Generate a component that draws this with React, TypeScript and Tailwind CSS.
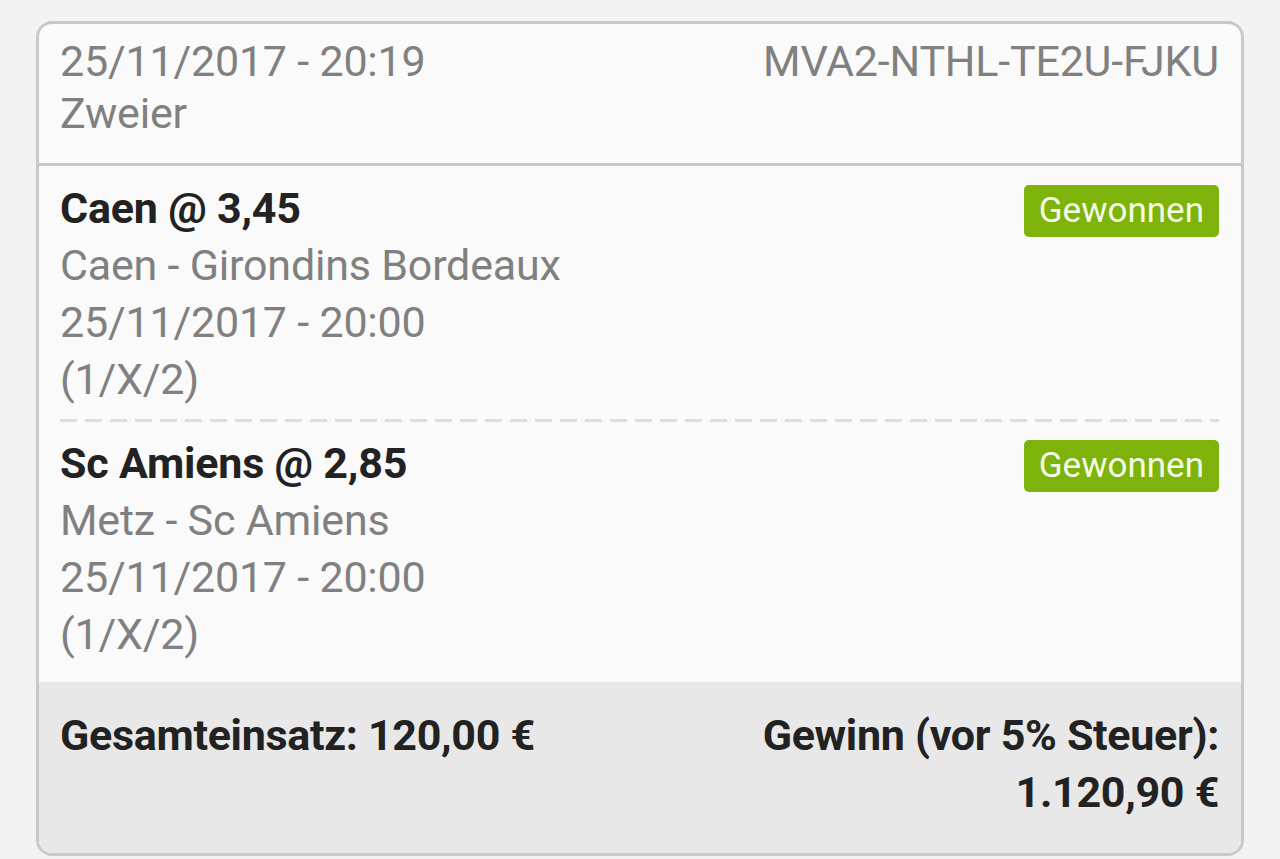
const BETS = [
  { pick: 'Caen @ 3,45', match: 'Caen - Girondins Bordeaux', date: '25/11/2017 - 20:00', market: '(1/X/2)' },
  { pick: 'Sc Amiens @ 2,85', match: 'Metz - Sc Amiens', date: '25/11/2017 - 20:00', market: '(1/X/2)' },
];

function BetRow({ bet, last }: { bet: (typeof BETS)[number]; last: boolean }) {
  return (
    <div className={last ? 'pt-[13px] pb-[19px]' : 'pt-[14px] pb-[11px]'}>
      <div className="flex items-start justify-between">
        <div className="text-[43px] leading-[57px] tracking-[-0.2px]">
          <div className="font-bold text-[#222222]">{bet.pick}</div>
          <div className="text-[#808080]">{bet.match}</div>
          <div className="text-[#808080]">{bet.date}</div>
          <div className="text-[#808080]">{bet.market}</div>
        </div>
        <span className="mt-[5px] rounded-[5px] bg-[#7db30a] px-[15px] text-[35px] leading-[52px] text-[#f4fbe6]">
          Gewonnen
        </span>
      </div>
    </div>
  );
}

export default function App() {
  return (
    <div className="min-h-screen bg-[#f3f3f3] px-[36px] pt-[21px] font-['Roboto',sans-serif]">
      <div className="overflow-hidden rounded-[16px] border-[3px] border-[#c9c9c9] bg-[#fafafa]">
        <div className="flex justify-between border-b-[3px] border-[#c9c9c9] pt-[11px] pr-[22px] pb-[24px] pl-[21px] text-[43px] leading-[52px] tracking-[-0.2px] text-[#808080]">
          <div>
            <div>25/11/2017 - 20:19</div>
            <div>Zweier</div>
          </div>
          <div>MVA2-NTHL-TE2U-FJKU</div>
        </div>

        <div className="pr-[22px] pl-[21px]">
          {BETS.map((bet, i) => (
            <div key={bet.pick}>
              {i > 0 && (
                <div className="h-[3px] bg-[repeating-linear-gradient(to_right,#dedede_0_17px,transparent_17px_25px)]" />
              )}
              <BetRow bet={bet} last={i === BETS.length - 1} />
            </div>
          ))}
        </div>

        <div className="flex justify-between bg-[#e8e8e8] pt-[25px] pr-[22px] pb-[32px] pl-[21px] text-[43px] leading-[57px] font-bold tracking-[-0.3px] text-[#222222]">
          <div>Gesamteinsatz: 120,00 €</div>
          <div className="text-right">
            <div>Gewinn (vor 5% Steuer):</div>
            <div>1.120,90 €</div>
          </div>
        </div>
      </div>
    </div>
  );
}
